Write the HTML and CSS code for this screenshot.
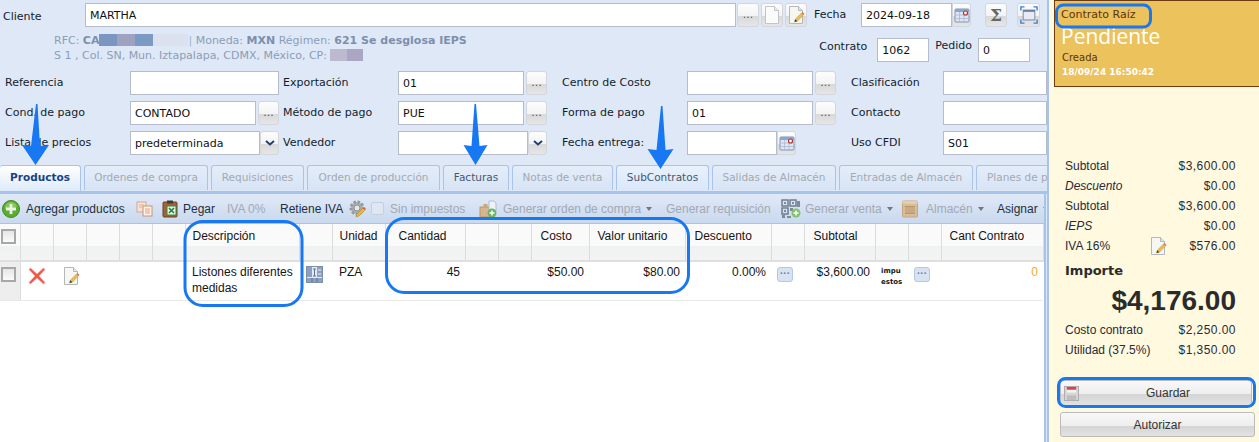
FILE: index.html
```html
<!DOCTYPE html>
<html lang="es">
<head>
<meta charset="utf-8">
<title>Contrato</title>
<link rel="stylesheet" href="styles.css">
</head>
<body>
<svg class="defs" width="0" height="0" aria-hidden="true">
  <symbol id="i-doc" viewBox="0 0 18 20">
    <path d="M2.500 1.500h9l4 4v13h-13z" fill="#fbfbfb" stroke="#c4c4c4"/>
    <path d="M11.500 1.500v4h4" fill="#ececec" stroke="#c4c4c4"/>
  </symbol>
  <symbol id="i-edit" viewBox="0 0 18 20">
    <path d="M2.500 1.500h9l4 4v13h-13z" fill="#f6f7f2" stroke="#b4b8bb"/>
    <path d="M11.500 1.500v4h4" fill="#e4e6e6" stroke="#b4b8bb"/>
    <path d="M7.500 17l.8-2.800 6.200-6.200 2 2-6.200 6.200z" fill="#e9bd54" stroke="#b58f35" stroke-width=".5"/>
    <path d="M14.500 8l1-1 2 2-1 1z" fill="#e0686a"/>
    <path d="M7.500 17l.8-2.800 2 2z" fill="#3d3d3d"/>
  </symbol>
  <symbol id="i-cal" viewBox="0 0 16 16">
    <rect x="1" y="2" width="14" height="13" rx="1" fill="#dfe6f2" stroke="#7f97b8"/>
    <rect x="1" y="2" width="14" height="3" fill="#8ba6ca"/>
    <path d="M1 8h14M1 11.500h14M5.500 5v10M10 5v10" stroke="#a9bad3" stroke-width=".8"/>
    <circle cx="11.500" cy="6" r="2" fill="#fff" stroke="#b5332e" stroke-width="1.200"/>
  </symbol>
  <symbol id="i-expand" viewBox="0 0 20 20">
    <rect x="3.500" y="4.500" width="13" height="11" fill="#e6ebf5" stroke="#6e7f9e"/>
    <rect x="3.500" y="4.500" width="13" height="2" fill="#6e7f9e"/>
    <path d="M1 5V1h4M15 1h4v4M19 15v4h-4M5 19H1v-4" fill="none" stroke="#3a7fe0" stroke-width="1.600"/>
  </symbol>
  <symbol id="i-add" viewBox="0 0 18 18">
    <circle cx="9" cy="9" r="8.500" fill="#5cab32" stroke="#3d8a22"/>
    <path d="M3 9a6 6 0 0 1 12-2z" fill="#9bd06b" opacity=".7"/>
    <path d="M9 4v10M4 9h10" stroke="#e9f5e2" stroke-width="2.800"/>
  </symbol>
  <symbol id="i-copy" viewBox="0 0 17 16">
    <rect x="1" y="1" width="9" height="10" fill="#f6e3d6" stroke="#d2a98c"/>
    <rect x="7" y="5" width="9" height="10" fill="#fff3ea" stroke="#c99470"/>
    <path d="M9 8h5M9 10h5M9 12h5" stroke="#e0856a" stroke-width=".8"/>
    <path d="M3 4h5M3 6h3" stroke="#e0a58a" stroke-width=".8"/>
  </symbol>
  <symbol id="i-paste" viewBox="0 0 16 18">
    <rect x="1" y="2" width="14" height="15" rx="1" fill="#a5623a" stroke="#6e3f22"/>
    <rect x="5" y="0.500" width="6" height="3" fill="#39402f"/>
    <rect x="5" y="6" width="9" height="9" fill="#e9f5e6" stroke="#2f8a3c"/>
    <path d="M7 8l5 5M12 8l-5 5" stroke="#1f7a30" stroke-width="1.500"/>
  </symbol>
  <symbol id="i-gear" viewBox="0 0 18 18">
    <circle cx="8" cy="8" r="6" fill="#aeb2b6" stroke="#96999d" stroke-width="3" stroke-dasharray="2.500 1.500"/>
    <circle cx="8" cy="8" r="3" fill="#e8e8e8" stroke="#8a8e92"/>
    <path d="M7 17l1-3 6-6 2 2-6 6z" fill="#e8b93c" stroke="#a67c1c" stroke-width=".5"/>
    <path d="M14 8l1-1 2 2-1 1z" fill="#d8574e"/>
  </symbol>
  <symbol id="i-order" viewBox="0 0 18 18">
    <rect x="1" y="7" width="11" height="10" fill="#d7b68e" stroke="#b7966c"/>
    <rect x="4.500" y="4" width="4" height="4" fill="#c9a87e"/>
    <path d="M10 1h5l2 2v8h-7z" fill="#eef3fa" stroke="#a9bcd6"/>
    <circle cx="13" cy="13" r="4.500" fill="#6cb563"/>
    <path d="M13 10.500v5M10.500 13h5" stroke="#fff" stroke-width="1.400"/>
  </symbol>
  <symbol id="i-qr" viewBox="0 0 20 20">
    <path d="M1 1h6v6H1zM9 1h6v6H9zM1 9h6v6H1z" fill="none" stroke="#6f7f8f" stroke-width="1.500"/>
    <path d="M3 3h2v2H3zM11 3h2v2h-2zM3 11h2v2H3zM9 9h3v3H9zM1 16h3v3H1zM6 17h4v2H6zM16 2h3v6h-3z" fill="#7d8a99"/>
    <circle cx="15" cy="14" r="4.500" fill="#7fc36f"/>
    <path d="M15 11.500v5M12.500 14h5" stroke="#fff" stroke-width="1.400"/>
  </symbol>
  <symbol id="i-box" viewBox="0 0 16 18">
    <rect x="0.500" y="1" width="15" height="16" rx="1" fill="#d9bd98" stroke="#c7a67c"/>
    <rect x="0.500" y="1" width="15" height="3" fill="#e3cdaf"/>
    <path d="M4 6.500v7M6 6.500v7M8 6.500v7M10 6.500v7M12 6.500v7M3 6.500h10M3 13.500h10" stroke="#b5946b" stroke-width=".9"/>
  </symbol>
  <symbol id="i-x" viewBox="0 0 18 18">
    <path d="M1 2.500L2.500 1 9 7l6.500-6L17 2.500 11 9l6 6.500-1.500 1.500L9 11l-6.500 6L1 15.500 7 9z" fill="#ee5a4a" stroke="#f09a8e" stroke-width=".5"/>
  </symbol>
  <symbol id="i-cols" viewBox="0 0 17 17">
    <rect x="0.500" y="0.500" width="16" height="16" fill="#e4ebf5" stroke="#7b90ad"/>
    <path d="M6 1H1v10h5zM1 12h15v4H1zM11 1h5v10h-5z" fill="#8ba1bf"/>
    <path d="M8.500 3v7M7 3h3M7 10h3M6 12v4M11 12v4" stroke="#5c7393" stroke-width="1"/>
    <path d="M12 4h3M12 8h3" stroke="#eef2f8"/>
  </symbol>
  <symbol id="i-save" viewBox="0 0 16 16">
    <rect x="0.500" y="0.500" width="15" height="15" fill="#d6d6d6" stroke="#aaa"/>
    <rect x="3" y="1" width="10" height="6" fill="#f4f4f4"/>
    <rect x="3" y="1" width="10" height="3" fill="#d9434a"/>
    <rect x="3" y="10" width="10" height="5" fill="#bdbdbd"/>
  </symbol>
</svg>

<div class="app">
  <main class="main">
    <header class="form">
      <div class="client-row">
        <label class="lbl lbl-client">Cliente</label>
        <div class="field field-client">MARTHA</div>
        <button class="btn btn-dots btn-first" type="button">...</button>
        <button class="btn btn-icon" type="button"><svg class="ico-18"><use href="#i-doc"/></svg></button>
        <button class="btn btn-icon" type="button"><svg class="ico-18"><use href="#i-edit"/></svg></button>
        <label class="lbl lbl-fecha">Fecha</label>
        <div class="field field-date">2024-09-18</div>
        <button class="btn btn-cal" type="button"><svg class="ico-16"><use href="#i-cal"/></svg></button>
        <button class="btn btn-sigma" type="button">Σ</button>
        <button class="btn btn-expand" type="button"><svg class="ico-18"><use href="#i-expand"/></svg></button>
      </div>
      <div class="info-row">
        <div class="info">
          <div class="info-line">RFC: <b>CA</b><span class="blur b1"></span><span class="blur b2"></span><span class="blur b3"></span><span class="blur b4"></span><span class="sep">|</span> Moneda: <b>MXN</b> Régimen: <b>621 Se desglosa IEPS</b></div>
          <div class="info-line">S 1 , Col. SN, Mun. Iztapalapa, CDMX, México, CP: <span class="blur b5"></span><span class="blur b6"></span></div>
        </div>
        <div class="refs">
          <label class="lbl lbl-contrato">Contrato</label>
          <div class="field field-num">1062</div>
          <label class="lbl lbl-pedido">Pedido</label>
          <div class="field field-num">0</div>
        </div>
      </div>
      <div class="grid">
        <label class="lbl">Referencia</label>
        <div class="cell cell-a"><div class="field grow"></div></div>
        <label class="lbl">Exportación</label>
        <div class="cell"><div class="field grow">01</div><button class="btn btn-dots" type="button">...</button></div>
        <label class="lbl">Centro de Costo</label>
        <div class="cell"><div class="field grow"></div><button class="btn btn-dots" type="button">...</button></div>
        <label class="lbl">Clasificación</label>
        <div class="cell cell-d"><div class="field grow"></div></div>

        <label class="lbl">Cond. de pago</label>
        <div class="cell cell-a"><div class="field grow">CONTADO</div><button class="btn btn-dots" type="button">...</button></div>
        <label class="lbl">Método de pago</label>
        <div class="cell"><div class="field grow">PUE</div><button class="btn btn-dots" type="button">...</button></div>
        <label class="lbl">Forma de pago</label>
        <div class="cell"><div class="field grow">01</div><button class="btn btn-dots" type="button">...</button></div>
        <label class="lbl">Contacto</label>
        <div class="cell cell-d"><div class="field grow"></div></div>

        <label class="lbl">Lista de precios</label>
        <div class="cell cell-a"><div class="field grow">predeterminada</div><button class="btn btn-arrow" type="button"><svg class="chev" viewBox="0 0 10 6"><path d="M1 1l4 3.500L9 1" fill="none" stroke="#1f3f77" stroke-width="2"/></svg></button></div>
        <label class="lbl">Vendedor</label>
        <div class="cell"><div class="field grow"></div><button class="btn btn-arrow" type="button"><svg class="chev" viewBox="0 0 10 6"><path d="M1 1l4 3.500L9 1" fill="none" stroke="#1f3f77" stroke-width="2"/></svg></button></div>
        <label class="lbl">Fecha entrega:</label>
        <div class="cell cell-date"><div class="field grow"></div><button class="btn btn-cal" type="button"><svg class="ico-16"><use href="#i-cal"/></svg></button></div>
        <label class="lbl">Uso CFDI</label>
        <div class="cell cell-d"><div class="field grow">S01</div></div>
      </div>
    </header>

    <nav class="tabs">
      <div class="tab tab-active tw-81">Productos</div>
      <div class="tab tab-off tw-124">Ordenes de compra</div>
      <div class="tab tab-off tw-93">Requisiciones</div>
      <div class="tab tab-off tw-133">Orden de producción</div>
      <div class="tab tab-on tw-66">Facturas</div>
      <div class="tab tab-off tw-101">Notas de venta</div>
      <div class="tab tab-on tab-hi tw-93">SubContratos</div>
      <div class="tab tab-off tw-124">Salidas de Almacén</div>
      <div class="tab tab-off tw-134">Entradas de Almacén</div>
      <div class="tab tab-off tab-clip">Planes de producción</div>
    </nav>

    <section class="panel">
      <div class="toolbar">
        <svg class="tb-add"><use href="#i-add"/></svg>
        <span class="tb t-agregar">Agregar productos</span>
        <svg class="tb-copy"><use href="#i-copy"/></svg>
        <svg class="tb-paste"><use href="#i-paste"/></svg>
        <span class="tb t-pegar">Pegar</span>
        <span class="tb off t-iva">IVA 0%</span>
        <span class="tb t-ret">Retiene IVA</span>
        <svg class="tb-gear"><use href="#i-gear"/></svg>
        <span class="tb-check"></span>
        <span class="tb off t-sin">Sin impuestos</span>
        <svg class="tb-order"><use href="#i-order"/></svg>
        <span class="tb off t-gen">Generar orden de compra <i class="caret"></i></span>
        <span class="tb off t-req">Generar requisición</span>
        <svg class="tb-qr"><use href="#i-qr"/></svg>
        <span class="tb off t-venta">Generar venta <i class="caret"></i></span>
        <svg class="tb-box"><use href="#i-box"/></svg>
        <span class="tb off t-alm">Almacén <i class="caret"></i></span>
        <span class="tb t-asig">Asignar <i class="caret"></i></span>
      </div>
      <table class="items">
        <colgroup>
          <col class="c20"><col class="c33"><col class="c33"><col class="c33"><col class="c33"><col class="c33">
          <col class="c114"><col class="c33"><col class="c53"><col class="c80"><col class="c33"><col class="c33">
          <col class="c58"><col class="c96"><col class="c86"><col class="c33"><col class="c71"><col class="c33"><col class="c33"><col class="c102">
        </colgroup>
        <thead>
          <tr>
            <th class="th-check"><span class="check"></span></th>
            <th></th><th></th><th></th><th></th><th></th>
            <th class="p7">Descripción</th><th></th><th class="p7">Unidad</th><th class="p13">Cantidad</th><th></th><th></th>
            <th class="p9">Costo</th><th class="p8">Valor unitario</th><th class="p9">Descuento</th><th></th>
            <th class="p9">Subtotal</th><th></th><th></th><th class="p8">Cant Contrato</th>
          </tr>
        </thead>
        <tbody>
          <tr>
            <td class="td-check"><span class="check"></span></td>
            <td class="td-ic"><svg class="ico-18"><use href="#i-x"/></svg></td>
            <td class="td-ic td-ic9"><svg class="ico-18"><use href="#i-edit"/></svg></td>
            <td></td><td></td><td></td>
            <td class="td-text">Listones diferentes medidas</td>
            <td class="td-ic"><svg class="ico-17"><use href="#i-cols"/></svg></td>
            <td class="td-text">PZA</td>
            <td class="num">45</td><td></td><td></td>
            <td class="num">$50.00</td><td class="num">$80.00</td><td class="num">0.00%</td>
            <td class="td-ic"><span class="more">···</span></td>
            <td class="num">$3,600.00</td>
            <td class="td-imp">impu<br>estos</td>
            <td class="td-ic"><span class="more">···</span></td>
            <td class="num zero">0</td>
          </tr>
        </tbody>
      </table>
    </section>
  </main>

  <aside class="side">
    <div class="status">
      <div class="status-root">Contrato Raíz</div>
      <div class="status-name">Pendiente</div>
      <div class="status-sub">Creada</div>
      <div class="status-date">18/09/24 16:50:42</div>
    </div>
    <dl class="totals">
      <div class="tot"><dt>Subtotal</dt><dd>$3,600.00</dd></div>
      <div class="tot it"><dt>Descuento</dt><dd>$0.00</dd></div>
      <div class="tot"><dt>Subtotal</dt><dd>$3,600.00</dd></div>
      <div class="tot it"><dt>IEPS</dt><dd>$0.00</dd></div>
      <div class="tot tot-iva"><dt>IVA 16%</dt><svg class="ico-18"><use href="#i-edit"/></svg><dd>$576.00</dd></div>
    </dl>
    <div class="importe-lbl">Importe</div>
    <div class="importe">$4,176.00</div>
    <dl class="totals totals-2">
      <div class="tot"><dt>Costo contrato</dt><dd>$2,250.00</dd></div>
      <div class="tot"><dt>Utilidad (37.5%)</dt><dd>$1,350.00</dd></div>
    </dl>
    <button class="action action-save" type="button"><svg class="save-ico"><use href="#i-save"/></svg>Guardar</button>
    <button class="action action-auth" type="button">Autorizar</button>
    <button class="action action-next" type="button"></button>
  </aside>
</div>

<svg class="marks" width="1259" height="442" viewBox="0 0 1259 442" aria-hidden="true">
  <g fill="#1877f2">
    <path d="M36 104l1.500 0 2.500 42 9-1-13.500 20L22 145l9 1z"/>
    <path d="M474.500 104l1.500 0 3.500 42 8-1-12 20-12-20 8 1z"/>
    <path d="M661 106l1.500 0 3 44 8-1-13 20-13-20 9 1z"/>
  </g>
  <g fill="none" stroke="#1877f2" stroke-width="3">
    <rect x="1056.500" y="5" width="94" height="22" rx="7"/>
    <rect x="185" y="221.500" width="117" height="84" rx="18"/>
    <rect x="386.500" y="218.500" width="302" height="74" rx="18"/>
    <rect x="1058.500" y="378.500" width="196" height="28" rx="7"/>
  </g>
</svg>
</body>
</html>
```

FILE: styles.css
```css
* { box-sizing: border-box; }
html, body { margin: 0; height: 442px; overflow: hidden; background: #fff; }
body { font: 11px/16px "DejaVu Sans", sans-serif; color: #111; position: relative; width: 1259px; }
.defs { position: absolute; }
.marks { position: absolute; left: 0; top: 0; pointer-events: none; }
.app { display: flex; height: 442px; }

.main { width: 1049px; flex: none; height: 442px; background: #dfe8f6; border-right: 2px solid #a8c3e8; display: flex; flex-direction: column; overflow: hidden; }

/* form */
.form { height: 165px; flex: none; padding-top: 3px; }
.client-row { display: flex; align-items: center; height: 24px; }
.lbl { color: #111d2d; white-space: nowrap; }
.lbl-client { width: 85px; padding: 3px 0 0 3px; flex: none; }
.lbl-fecha { width: 54px; padding-left: 7px; flex: none; }
.field { height: 24px; background: #fff; border: 1px solid #b6bccc; padding: 4px 4px 0; color: #111; white-space: nowrap; overflow: hidden; font-size: 11px; }
.field-client { width: 651px; flex: none; }
.field-date { width: 91px; flex: none; }
.grow { flex: 1; min-width: 0; }
.btn { padding: 0; margin: 0; font: inherit; color: #555; height: 24px; border: 1px solid #d3d6dc; border-radius: 3px; background: linear-gradient(#fdfdfd 0, #f3f3f3 55%, #d9d9d9 56%, #e6e6e6 100%); display: flex; align-items: center; justify-content: center; flex: none; }
.btn-dots { width: 21px; margin-left: 2px; line-height: 12px; font-size: 11px; }
.btn-first { margin-left: 1px; width: 22px; }
.btn-icon { width: 22px; margin-left: 2px; }
.btn-cal { width: 19px; border-radius: 0 3px 3px 0; }
.btn-sigma { width: 22px; margin-left: 14px; font: bold 17px/20px "DejaVu Serif", serif; color: #666; }
.btn-expand { width: 23px; margin-left: 10px; }
.ico-18 { width: 18px; height: 20px; display: block; }
.ico-16 { width: 16px; height: 16px; display: block; }
.ico-17 { width: 17px; height: 17px; display: block; }

.info-row { display: flex; justify-content: space-between; height: 44px; }
.info { padding: 6px 0 0 54px; color: #8c9db8; font-size: 11px; line-height: 15px; }
.info-line { white-space: nowrap; height: 15px; }
.info b { color: #7d8fae; }
.blur { display: inline-block; height: 12px; vertical-align: -2px; }
.b1 { width: 18px; background: #7b97c0; }
.b2 { width: 18px; background: #a0a3c0; }
.b3 { width: 18px; background: #7b9bc5; }
.b4 { width: 35px; background: #dbe1ee; }
.b5 { width: 17px; background: #bdb9cf; }
.b6 { width: 16px; background: #aba6c4; }
.sep { color: #9fb2cc; }
.refs { display: flex; align-items: flex-start; padding: 11px 17px 0 0; height: 44px; }
.lbl-contrato { margin: 1px 10px 0 0; }
.lbl-pedido { margin: 0 6px; }
.field-num { width: 52px; }

.grid { display: grid; grid-template-columns: 125px 153px 115px 164px 125px 164px 92px 104px; grid-auto-rows: 24px; row-gap: 6px; padding-left: 5px; align-items: center; }
.cell { display: flex; align-items: center; padding-right: 15px; }
.cell-a { padding-right: 4px; }
.cell-d { padding-right: 0; }
.cell-date { padding-right: 55px; }
.btn-arrow { width: 19px; }
.chev { width: 10px; height: 6px; display: block; }

/* tabs */
.tabs { height: 29px; flex: none; display: flex; gap: 3px; border-bottom: 3px solid #a8c3e8; overflow: hidden; }
.tab { height: 25px; line-height: 23px; text-align: center; flex: none; font-size: 10.500px; border: 1px solid #a9c4e8; border-bottom: 0; border-radius: 3px 3px 0 0; background: linear-gradient(#e4edf9, #d7e4f6); white-space: nowrap; overflow: hidden; }
.tab-off { color: #a4a9b1; }
.tab-on { color: #46586f; }
.tab-hi { background: linear-gradient(#e8f1fc, #dae8fb); }
.tab-active { color: #15428b; font-weight: bold; background: linear-gradient(#fff, #deebfb); height: 26px; border-left: 0; }
.tw-81 { width: 81px; }
.tw-124 { width: 124px; }
.tw-93 { width: 93px; }
.tw-133 { width: 133px; }
.tw-66 { width: 66px; }
.tw-101 { width: 101px; }
.tw-134 { width: 134px; }
.tab-clip { width: 120px; text-align: left; padding-left: 10px; }

/* panel */
.panel { width: 1046px; flex: 1; background: #fff; border-right: 2px solid #a8c3e8; display: flex; flex-direction: column; }
.toolbar { height: 30px; flex: none; display: flex; align-items: center; background: linear-gradient(#e0e9f7, #c9d9ef); border-bottom: 1px solid #a8c3e8; font: 12px/16px "Liberation Sans", sans-serif; white-space: nowrap; overflow: hidden; }
.tb { color: #22303f; flex: none; }
.off { color: #a3a9b2; }
.caret { display: inline-block; width: 0; height: 0; border: 3.500px solid transparent; border-top: 4px solid #777; border-bottom: 0; vertical-align: 2px; margin-left: 2px; }
.toolbar svg { flex: none; display: block; }
.tb-add { width: 18px; height: 18px; margin-left: 2px; }
.t-agregar { margin-left: 6px; width: 100px; }
.tb-copy { width: 17px; height: 16px; margin-left: 10px; }
.tb-paste { width: 16px; height: 18px; margin-left: 9px; }
.t-pegar { margin-left: 5px; width: 33px; }
.t-iva { margin-left: 11px; width: 36px; }
.t-ret { margin-left: 17px; width: 63px; }
.tb-gear { width: 18px; height: 18px; margin-left: 6px; }
.tb-check { width: 13px; height: 13px; margin-left: 4px; flex: none; border: 1px solid #c6cfdb; border-radius: 2px; background: #dfe7f3; }
.t-sin { margin-left: 6px; width: 76px; }
.tb-order { width: 18px; height: 18px; margin-left: 13px; }
.t-gen { margin-left: 6px; width: 152px; }
.t-req { margin-left: 11px; width: 106px; }
.tb-qr { width: 20px; height: 20px; margin-left: 9px; }
.t-venta { margin-left: 4px; width: 85px; }
.tb-box { width: 16px; height: 18px; margin-left: 12px; }
.t-alm { margin-left: 8px; width: 60px; }
.t-asig { margin-left: 11px; }

.items { border-collapse: collapse; table-layout: fixed; width: 1043px; font: 12px/16px "Liberation Sans", sans-serif; color: #151515; }
.c20 { width: 20px; } .c33 { width: 33px; } .c53 { width: 53px; } .c58 { width: 58px; }
.c71 { width: 71px; } .c80 { width: 80px; } .c86 { width: 86px; } .c96 { width: 96px; } .c102 { width: 102px; } .c114 { width: 114px; }
.items th { height: 37px; padding: 3px 0 0; vertical-align: top; text-align: left; font-weight: normal; background: linear-gradient(#fafafa 0, #fafafa 60%, #f0f1f2 62%, #f3f3f3 100%); border-right: 1px solid #dcdcdc; border-bottom: 2px solid #dfdfdf; white-space: nowrap; overflow: hidden; line-height: 18px; }
.items .th-check { padding: 5px 0 0 1px; }
.items .p7 { padding-left: 7px; }
.items .p8 { padding-left: 8px; }
.items .p9 { padding-left: 9px; }
.items .p13 { padding-left: 13px; }
.items td { height: 39px; padding: 2px 0 0; vertical-align: top; border-bottom: 1px solid #e8e8e8; }
.items .td-check { background: #eee; padding: 5px 0 0 1px; border-right: 1px solid #ddd; }
.td-ic svg { margin: 2px 0 0 7px; }
.td-ic9 svg { margin-left: 9px; }
.items .td-text { padding-left: 7px; }
.items .num { text-align: right; padding-right: 5px; }
.items .td-imp { font: bold 7px/10.500px "DejaVu Sans", sans-serif; padding: 4px 0 0 6px; }
.zero { color: #f2a91f; }
.more { display: block; width: 16px; height: 15px; margin: 3px 0 0 6px; border: 1px solid #b5c7e2; border-radius: 3px; background: #d7e2f2; color: #6d7f98; font: bold 10px/12px "Liberation Sans", sans-serif; text-align: center; }
.check { display: block; width: 15px; height: 15px; border: 2px solid #a8a8a8; background: linear-gradient(#e6e6e6, #fbfbfb); }

/* sidebar */
.side { flex: 1; height: 442px; background: #fef9df; font: 12px/16px "Liberation Sans", sans-serif; color: #2a2a3a; overflow: hidden; }
.status { height: 87px; margin-left: 5px; padding: 7px 0 0 6px; background: #ecc25c; border: solid #6b3a10; border-width: 1px 0 1px 1px; font-family: "DejaVu Sans", sans-serif; color: #5a3510; }
.status-root { font-size: 11px; line-height: 14px; }
.status-name { color: #fff; font: 21px/24px "Open Sans", sans-serif; margin-top: 2px; }
.status-sub { font-size: 10px; line-height: 15px; margin-top: 2px; padding-left: 1px; }
.status-date { color: #fff; font-size: 9px; font-weight: bold; line-height: 15px; padding-left: 1px; }
.totals { margin: 69px 23px 0 16px; }
.tot { display: flex; justify-content: space-between; align-items: center; height: 20px; }
.tot dt { margin: 0; }
.tot dd { margin: 0; letter-spacing: .45px; }
.it dt { font-style: italic; }
.tot-iva .ico-18 { margin-left: 16px; }
.importe-lbl { margin: 6px 0 0 16px; font: bold 13px/18px "DejaVu Sans", sans-serif; color: #2b2b2b; }
.importe { margin: 5px 23px 0 0; text-align: right; font: bold 28px/32px "Liberation Sans", sans-serif; color: #2b2b2b; }
.totals-2 { margin-top: 3px; }
.action { display: block; font: 12px/16px "Liberation Sans", sans-serif; color: #333; padding: 0; border: 1px solid #bbb; border-radius: 3px; background: linear-gradient(#f8f8f8 0, #eee 55%, #d5d5d5 56%, #e2e2e2 100%); position: relative; }
.action-save { width: 192px; height: 26px; margin: 20px 0 0 11px; padding-left: 24px; }
.save-ico { position: absolute; left: 3px; top: 5px; width: 15px; height: 15px; }
.action-auth { width: 195px; height: 25px; margin: 6px 0 0 11px; }
.action-next { width: 195px; height: 23px; margin: 5px 0 0 11px; }
```
